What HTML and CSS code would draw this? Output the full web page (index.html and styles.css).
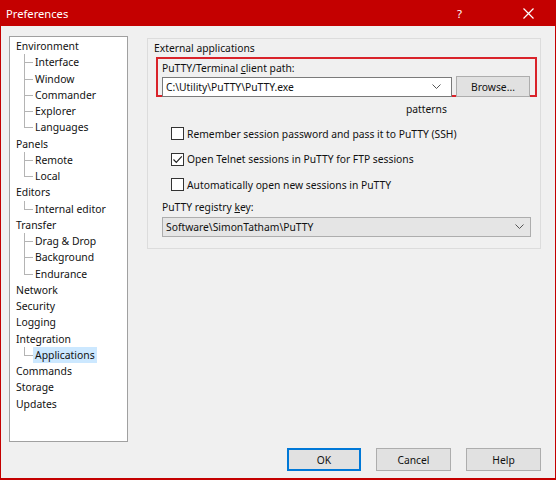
FILE: index.html
```html
<!DOCTYPE html>
<html>
<head>
<meta charset="utf-8">
<link rel="stylesheet" href="styles.css">
</head>
<body>
<div class="window">
  <div class="titlebar">
    <span class="title">Preferences</span>
    <span class="help-btn">?</span>
    <span class="close-btn"><svg width="11" height="11" viewBox="0 0 11 11"><path d="M0.5 0.5 L10.5 10.5 M10.5 0.5 L0.5 10.5" stroke="#fff" stroke-width="1.2" fill="none"/></svg></span>
  </div>
  <div class="main">
    <div class="tree">
      <div class="node">Environment</div>
      <div class="children">
        <div class="child">Interface</div>
        <div class="child">Window</div>
        <div class="child">Commander</div>
        <div class="child">Explorer</div>
        <div class="child last">Languages</div>
      </div>
      <div class="node">Panels</div>
      <div class="children">
        <div class="child">Remote</div>
        <div class="child last">Local</div>
      </div>
      <div class="node">Editors</div>
      <div class="children">
        <div class="child last">Internal editor</div>
      </div>
      <div class="node">Transfer</div>
      <div class="children">
        <div class="child">Drag &amp; Drop</div>
        <div class="child">Background</div>
        <div class="child last">Endurance</div>
      </div>
      <div class="node">Network</div>
      <div class="node">Security</div>
      <div class="node">Logging</div>
      <div class="node">Integration</div>
      <div class="children">
        <div class="child last"><span class="selected">Applications</span></div>
      </div>
      <div class="node">Commands</div>
      <div class="node">Storage</div>
      <div class="node">Updates</div>
    </div>
    <div class="group">
      <div class="group-label">External applications</div>
      <div class="highlight">
        <div class="field-label">PuTTY/Terminal <u>c</u>lient path:</div>
        <div class="path-row">
          <div class="combo white">
            <span class="combo-text">C:\Utility\PuTTY\PuTTY.exe</span>
            <svg class="chev" width="9" height="5" viewBox="0 0 9 5"><path d="M0.5 0.5 L4.5 4.5 L8.5 0.5" stroke="#555" stroke-width="1" fill="none"/></svg>
          </div>
          <div class="btn browse">Browse...</div>
        </div>
      </div>
      <div class="patterns">patterns</div>
      <div class="check-row">
        <span class="checkbox"></span>
        <span>Remember session password and pass it to PuTTY (SSH)</span>
      </div>
      <div class="check-row">
        <span class="checkbox"><svg width="11" height="11" viewBox="0 0 11 11"><path d="M1.5 5.5 L4.3 8.3 L9.8 2.3" stroke="#222" stroke-width="1.2" fill="none"/></svg></span>
        <span>Open Telnet sessions in PuTTY for FTP sessions</span>
      </div>
      <div class="check-row">
        <span class="checkbox"></span>
        <span>Automatically open new sessions in PuTTY</span>
      </div>
      <div class="reg-label">PuTTY registry <u>k</u>ey:</div>
      <div class="combo grey reg">
        <span class="combo-text">Software\SimonTatham\PuTTY</span>
        <svg class="chev" width="9" height="5" viewBox="0 0 9 5"><path d="M0.5 0.5 L4.5 4.5 L8.5 0.5" stroke="#555" stroke-width="1" fill="none"/></svg>
      </div>
    </div>
  </div>
  <div class="buttons">
    <div class="btn ok">OK</div>
    <div class="btn">Cancel</div>
    <div class="btn">Help</div>
  </div>
</div>
</body>
</html>
```

FILE: styles.css
```css
html, body {
  margin: 0;
  padding: 0;
}
body {
  font-family: "Noto Sans", "Open Sans", sans-serif;
  font-size: 10.3px;
  color: #111;
  background: #f0f0f0;
}
.window {
  width: 556px;
  height: 480px;
  box-sizing: border-box;
  border: 1px solid #c40000;
  border-top: 0;
  border-bottom-width: 2px;
  background: #f0f0f0;
  display: flex;
  flex-direction: column;
}
.titlebar {
  height: 26px;
  background: #c40000;
  color: #fff;
  display: flex;
  align-items: center;
  padding-left: 6px;
  flex: none;
  margin: 0 -1px;
}
.title {
  font-size: 11.2px;
  flex: 1;
}
.help-btn {
  font-size: 11.5px;
  width: 20px;
  margin-right: 46px;
}
.close-btn {
  display: flex;
  margin-right: 22px;
}
.main {
  display: flex;
  padding: 10px 0 0 8px;
  align-items: flex-start;
}
.tree {
  width: 117px;
  height: 403px;
  border: 1px solid #a0a0a0;
  background: #fff;
  padding-top: 1px;
  line-height: 16.25px;
  white-space: nowrap;
  font-size: 10.4px;
}
.node {
  padding-left: 6px;
  height: 16.25px;
}
.child {
  position: relative;
  padding-left: 25px;
  height: 16.25px;
}
.child::before {
  content: "";
  position: absolute;
  left: 14px;
  top: 8px;
  width: 9px;
  border-top: 1px solid #b4b4b4;
}
.child::after {
  content: "";
  position: absolute;
  left: 14px;
  top: 0;
  height: 16.25px;
  border-left: 1px solid #b4b4b4;
}
.child.last::after {
  height: 8px;
}
.selected {
  background: #cce8ff;
  padding: 0 2px;
  margin-left: -2px;
  display: inline-block;
  height: 16px;
}
.group {
  margin-left: 19px;
  margin-top: 2px;
  width: 394px;
  height: 211px;
  border: 1px solid #dcdcdc;
  box-sizing: border-box;
  padding: 0 0 0 8px;
}
.group-label {
  margin-left: -2px;
  margin-top: 2px;
  height: 16px;
  line-height: 14px;
}
.highlight {
  width: 381px;
  height: 40px;
  box-sizing: border-box;
  border: 2px solid #d9232a;
  padding: 0 0 0 4px;
  margin-top: 0;
}
.field-label {
  height: 16px;
  line-height: 16px;
  margin-top: 1px;
}
.path-row {
  display: flex;
  align-items: center;
}
.combo {
  display: flex;
  align-items: center;
  box-sizing: border-box;
  height: 20px;
  padding: 0 0 0 3px;
}
.combo.white {
  width: 290px;
  background: #fff;
  border: 1px solid #7a7a7a;
}
.combo-text {
  flex: 1;
}
.chev {
  margin-right: 10px;
}
.btn {
  box-sizing: border-box;
  width: 75px;
  height: 23px;
  background: #e1e1e1;
  border: 1px solid #adadad;
  display: flex;
  align-items: center;
  justify-content: center;
}
.browse {
  width: 74px;
  height: 21px;
  margin-left: 4px;
}
.patterns {
  margin-left: 250px;
  height: 15px;
  line-height: 15px;
  margin-top: 5px;
  margin-bottom: 4px;
}
.check-row {
  display: flex;
  align-items: center;
  height: 25.5px;
  margin-left: 15px;
}
.checkbox {
  width: 13px;
  height: 13px;
  box-sizing: border-box;
  border: 1px solid #333;
  background: #fff;
  margin-right: 3px;
  display: flex;
  align-items: center;
  justify-content: center;
}
.reg-label {
  margin-top: 1px;
  margin-left: 6px;
  height: 16px;
  line-height: 16px;
}
.combo.grey {
  width: 369px;
  margin-left: 6px;
  margin-top: 2px;
  background: #e5e5e5;
  border: 1px solid #adadad;
}
.reg .chev {
  margin-right: 6px;
}
.buttons {
  margin-top: auto;
  display: flex;
  justify-content: flex-end;
  gap: 15px;
  padding: 0 14px 7px 0;
}
.btn.ok {
  border: 2px solid #0078d7;
  width: 74px;
}
```
